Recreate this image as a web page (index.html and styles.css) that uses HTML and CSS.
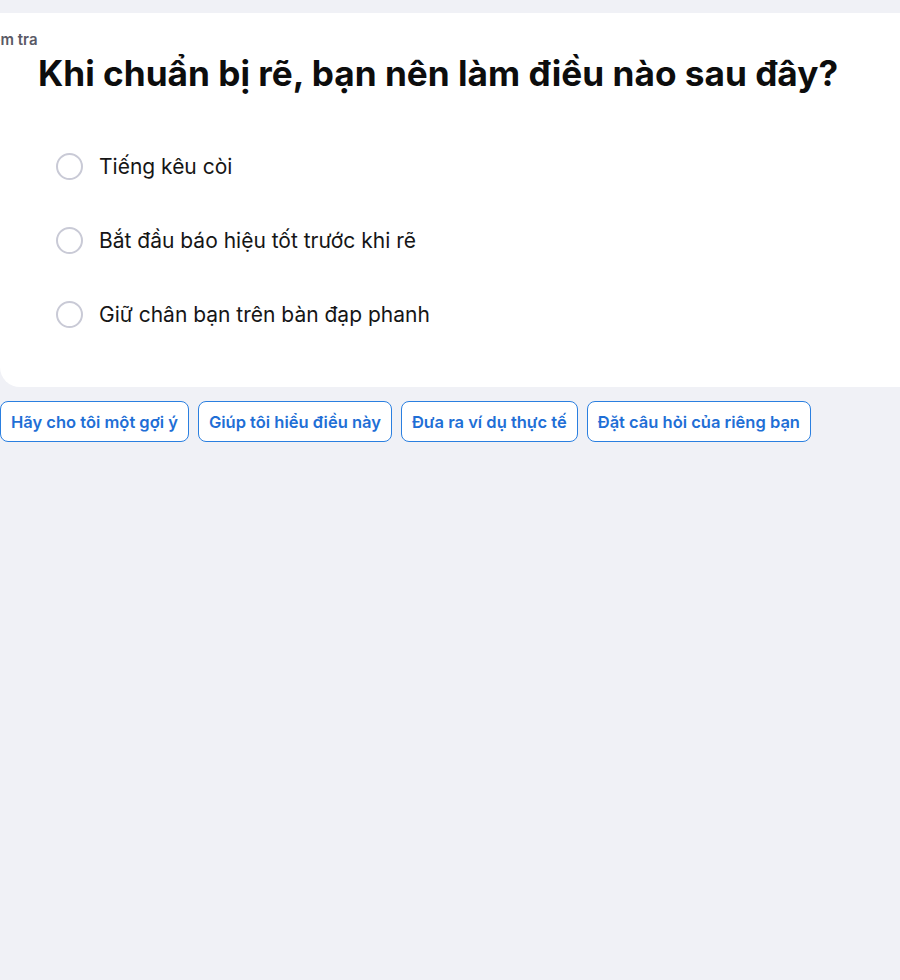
FILE: index.html
```html
<!DOCTYPE html>
<html lang="vi">
<head>
<meta charset="utf-8">
<link rel="stylesheet" href="styles.css">
</head>
<body>
<div class="page">
  <section class="card">
    <div class="label">Kiểm tra</div>
    <h1 class="question">Khi chuẩn bị rẽ, bạn nên làm điều nào sau đây?</h1>
    <ul class="options">
      <li class="option"><span class="radio"></span><span class="opt-text">Tiếng kêu còi</span></li>
      <li class="option"><span class="radio"></span><span class="opt-text">Bắt đầu báo hiệu tốt trước khi rẽ</span></li>
      <li class="option"><span class="radio"></span><span class="opt-text">Giữ chân bạn trên bàn đạp phanh</span></li>
    </ul>
  </section>
  <div class="chips">
    <button class="chip">Hãy cho tôi một gợi ý</button>
    <button class="chip">Giúp tôi hiểu điều này</button>
    <button class="chip">Đưa ra ví dụ thực tế</button>
    <button class="chip">Đặt câu hỏi của riêng bạn</button>
  </div>
</div>
</body>
</html>
```
FILE: styles.css
```css
html, body {
  margin: 0;
  padding: 0;
  background: #f0f1f6;
  font-family: "Inter", "Noto Sans", sans-serif;
  overflow: hidden;
}
.page {
  width: 960px;
  padding-top: 13px;
}
.card {
  background: #ffffff;
  border-radius: 0 0 20px 20px;
  padding: 18px 0 58px 0;
}
.label {
  font-size: 15px;
  font-weight: 600;
  color: #5a5a66;
  margin-left: -23px;
  line-height: 18px;
}
.question {
  margin: 3px 0 0 38px;
  font-size: 35.2px;
  font-weight: 700;
  color: #0d0d0d;
  line-height: 42px;
  letter-spacing: 0;
}
.options {
  list-style: none;
  margin: 57px 0 0 56px;
  padding: 0;
  display: flex;
  flex-direction: column;
  gap: 44px;
}
.option {
  display: flex;
  align-items: center;
  gap: 16px;
  height: 30px;
}
.radio {
  width: 23px;
  height: 23px;
  border: 2px solid #c9cad6;
  border-radius: 50%;
  flex: none;
}
.opt-text {
  font-size: 21px;
  color: #161616;
}
.chips {
  display: flex;
  gap: 9px;
  margin-top: 14px;
}
.chip {
  height: 41px;
  padding: 0 10px;
  background: #ffffff;
  border: 1px solid #2a7fe0;
  border-radius: 8px;
  color: #1f6fd6;
  font-family: "Inter", "Noto Sans", sans-serif;
  font-size: 16.5px;
  font-weight: 600;
  cursor: pointer;
}
```
